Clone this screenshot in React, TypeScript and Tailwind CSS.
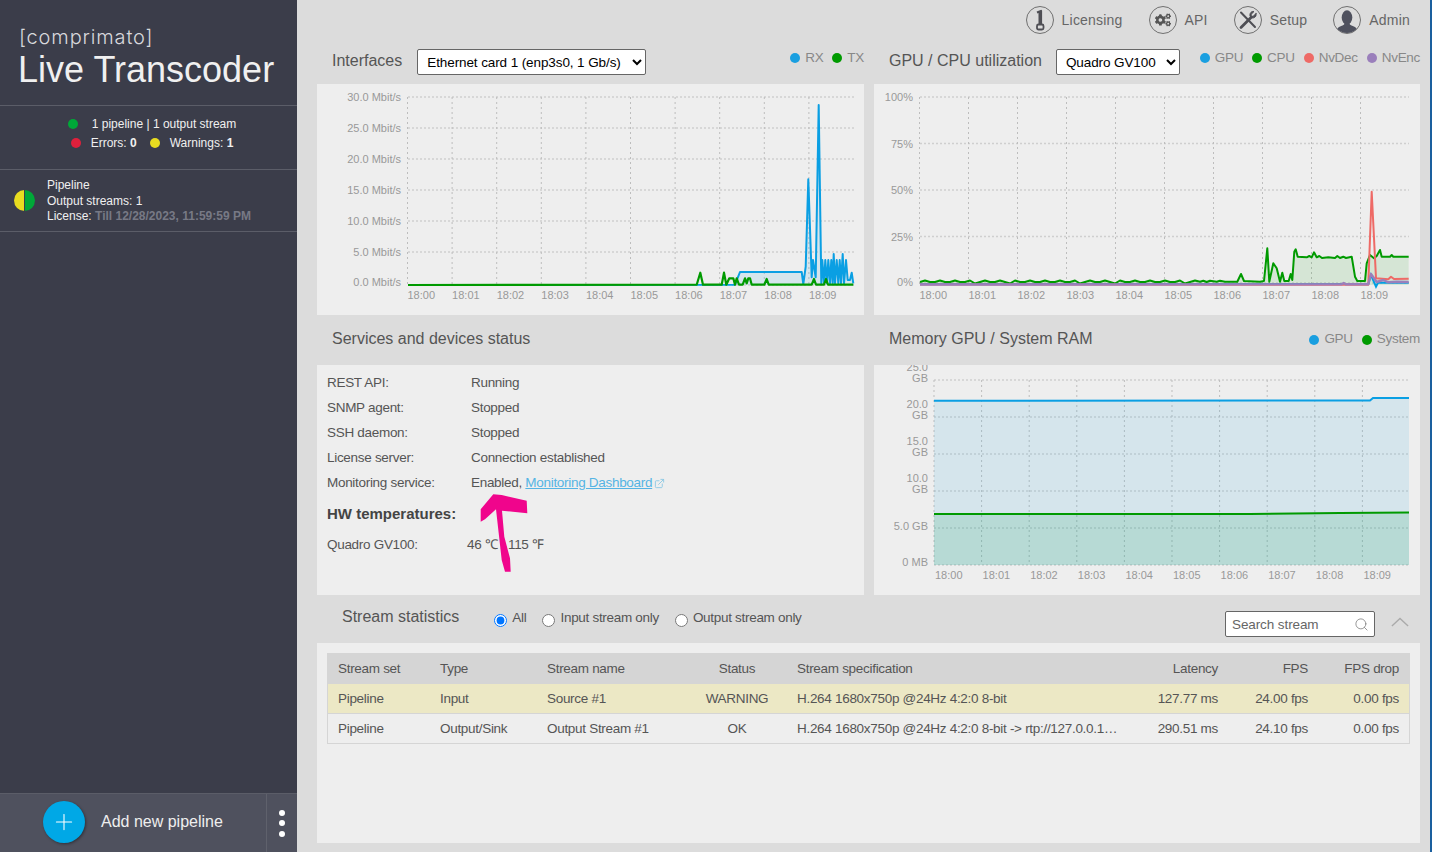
import React from "react";
import { Plus, ExternalLink, Search } from "lucide-react";
import { FaCogs } from "react-icons/fa";

type P = [number, number];
const toPath = (pts: P[]) => "M" + pts.map((p) => `${p[0].toFixed(1)} ${p[1].toFixed(1)}`).join("L");
const area = (pts: P[], base: number) =>
  toPath(pts) + `L${pts[pts.length - 1][0]} ${base}L${pts[0][0]} ${base}Z`;

const z1 = (p: P[]): P[] => p.map(([x, y]) => [640 + x / 3, 80 + y / 3]);
const z2 = (p: P[]): P[] => p.map(([x, y]) => [1200 + x / 3, 170 + y / 3]);

const rxPts: P[] = [
  [408, 285],
  ...z1([
    [285, 614], [300, 576], [485, 576], [490, 612], [497, 560], [505, 298], [515, 592], [519, 540], [527, 592],
    [536, 75], [544, 610], [547, 540], [552, 610], [556, 540], [561, 610], [565, 540], [570, 610], [574, 540],
    [578, 610], [581, 522], [585, 610], [590, 540], [595, 610], [599, 540], [603, 610], [608, 522], [612, 610],
    [618, 540], [623, 600], [630, 600], [635, 578], [640, 610],
  ]),
];
const txPts: P[] = [
  [408, 285],
  ...z1([
    [170, 614], [181, 578], [189, 614], [245, 614], [252, 578], [259, 614], [268, 595], [280, 595], [285, 614],
    [290, 595], [297, 614], [308, 614], [315, 595], [320, 610], [325, 595], [330, 595], [335, 614], [373, 614],
    [380, 597], [386, 614], [515, 614], [522, 597], [528, 614], [552, 614], [558, 597], [564, 614], [640, 614],
  ]),
];

const wiggle: P[] = [];
for (let x = 920, i = 0; x < 1200; x += 5, i++) wiggle.push([x, i % 3 === 1 ? 280.5 : i % 7 === 4 ? 283.5 : 282]);
const cpuPts: P[] = [
  ...wiggle,
  ...z2([
    [0, 335], [10, 332], [20, 336], [30, 332], [50, 335], [60, 332], [75, 335], [100, 335], [112, 335], [123, 312],
    [132, 333], [180, 335], [192, 333], [202, 235], [208, 335], [220, 280], [230, 295], [240, 335], [247, 308],
    [253, 333], [266, 333], [272, 312], [277, 330], [283, 245], [287, 238], [293, 260], [320, 262], [328, 258],
    [335, 262], [342, 247], [350, 262], [358, 258], [366, 264], [385, 262], [405, 264], [412, 258], [420, 264],
    [430, 260], [438, 264], [455, 260], [465, 320], [472, 333], [495, 333], [500, 280], [510, 255], [522, 265],
    [530, 258], [540, 240], [545, 260], [570, 260], [575, 255], [580, 260], [626, 260],
  ]),
];
const gpuPts: P[] = [[920, 284], ...z2([[505, 342], [513, 315], [528, 350], [534, 338], [626, 338]])];
const decPts: P[] = [[920, 284.5], ...z2([[505, 344], [515, 65], [528, 325], [565, 328], [573, 320], [582, 327], [626, 326]])];
const encPts: P[] = [[920, 284.5], ...z2([[425, 343], [431, 339], [437, 343], [505, 343], [513, 312], [530, 336], [550, 330], [565, 337], [590, 335], [626, 336]])];

const GridLines = ({ xs, ys, x0, x1, y0, y1 }: { xs: number[]; ys: number[]; x0: number; x1: number; y0: number; y1: number }) => (
  <g>
    {ys.map((y) => (
      <line key={y} x1={x0} x2={x1} y1={y} y2={y} stroke="#cfcfcf" strokeWidth={1.5} strokeDasharray="2 2" />
    ))}
    {xs.map((x) => (
      <line key={x} x1={x} x2={x} y1={y0} y2={y1} stroke="#bdbdbd" strokeWidth={1} strokeDasharray="2 3" />
    ))}
  </g>
);

const tick = "fill-[#999] text-[11px] tracking-normal";
const times = ["18:00", "18:01", "18:02", "18:03", "18:04", "18:05", "18:06", "18:07", "18:08", "18:09"];

function InterfacesChart() {
  const xs = times.map((_, i) => 407.5 + i * 44.6);
  const ys = [97, 128, 159, 190, 221, 252, 285];
  const labels = ["30.0 Mbit/s", "25.0 Mbit/s", "20.0 Mbit/s", "15.0 Mbit/s", "10.0 Mbit/s", "5.0 Mbit/s", "0.0 Mbit/s"];
  return (
    <svg viewBox="317 84 547 231" className="block w-full h-full">
      <GridLines xs={xs} ys={ys} x0={408} x1={854} y0={97} y1={285} />
      {labels.map((l, i) => (
        <text key={l} x={401} y={ys[i] + 4 - (i === 6 ? 3 : 0)} textAnchor="end" className={tick}>{l}</text>
      ))}
      {times.map((t, i) => (
        <text key={t} x={xs[i]} y={299} className={tick}>{t}</text>
      ))}
      <path d={area(rxPts, 285)} fill="#009fe3" fillOpacity={0.1} />
      <path d={toPath(rxPts)} fill="none" stroke="#0a9fe3" strokeWidth={2} strokeLinejoin="round" />
      <path d={toPath(txPts)} fill="none" stroke="#009a00" strokeWidth={2.2} strokeLinejoin="round" />
    </svg>
  );
}

function GpuChart() {
  const xs = times.map((_, i) => 919.5 + i * 49);
  const ys = [97, 143.5, 190, 236.5, 283];
  const labels = ["100%", "75%", "50%", "25%", "0%"];
  return (
    <svg viewBox="874 84 546 231" className="block w-full h-full">
      <GridLines xs={xs} ys={ys} x0={920} x1={1409} y0={97} y1={285} />
      {labels.map((l, i) => (
        <text key={l} x={913} y={ys[i] + 4 - (i === 4 ? 1 : 0)} textAnchor="end" className={tick}>{l}</text>
      ))}
      {times.map((t, i) => (
        <text key={t} x={xs[i]} y={299} className={tick}>{t}</text>
      ))}
      <path d={area(cpuPts, 285)} fill="#009a00" fillOpacity={0.1} />
      <path d={toPath(gpuPts)} fill="none" stroke="#009fe3" strokeWidth={2} />
      <path d={toPath(cpuPts)} fill="none" stroke="#009a00" strokeWidth={2} strokeLinejoin="round" />
      <path d={toPath(decPts)} fill="none" stroke="#ee6a66" strokeWidth={2} strokeLinejoin="round" />
      <path d={toPath(encPts)} fill="none" stroke="#9a7fbb" strokeWidth={2.4} strokeLinejoin="round" />
    </svg>
  );
}

function MemoryChart() {
  const xs = times.map((_, i) => 934 + i * 47.6);
  const ys = [380, 417, 454, 491, 528, 565];
  const blue: P[] = [[934, 400.7], [1370, 400.5], [1373, 398], [1409, 398]];
  const green: P[] = [[934, 514], [1250, 514], [1340, 513], [1409, 512.5]];
  const two: [string, string, number][] = [["25.0", "GB", 367], ["20.0", "GB", 404], ["15.0", "GB", 441], ["10.0", "GB", 478]];
  return (
    <svg viewBox="874 365 546 230" className="block w-full h-full">
      <GridLines xs={xs} ys={ys} x0={934} x1={1409} y0={380} y1={565} />
      {two.map(([a, b, y]) => (
        <g key={a}>
          <text x={928} y={y + 4} textAnchor="end" className={tick}>{a}</text>
          <text x={928} y={y + 15} textAnchor="end" className={tick}>{b}</text>
        </g>
      ))}
      <text x={928} y={530} textAnchor="end" className={tick}>5.0 GB</text>
      <text x={928} y={566} textAnchor="end" className={tick}>0 MB</text>
      {times.map((t, i) => (
        <text key={t} x={xs[i] + 1} y={579} className={tick}>{t}</text>
      ))}
      <path d={area(blue, 565)} fill="#009fe3" fillOpacity={0.1} />
      <path d={area(green, 565)} fill="#009a50" fillOpacity={0.14} />
      <path d={toPath(blue)} fill="none" stroke="#0a9fe3" strokeWidth={2} />
      <path d={toPath(green)} fill="none" stroke="#009a00" strokeWidth={2} />
    </svg>
  );
}

const Ring = ({ children }: { children: React.ReactNode }) => (
  <span className="relative flex items-center justify-center w-[28px] h-[28px] rounded-full border-[1.5px] border-[#707070] text-[#555] overflow-hidden">
    {children}
  </span>
);

const KeyIcon = () => (
  <svg viewBox="0 0 12 22" className="w-[12px] h-[22px]" fill="none" stroke="#4f4f55">
    <path d="M3 3.500L7 2V15" strokeWidth={2.200} strokeLinejoin="round" />
    <path d="M6 3V16" strokeWidth={3} />
    <rect x="3" y="15.500" width="6.500" height="5" rx="1.500" strokeWidth={1.800} />
  </svg>
);
const ToolsIcon = () => (
  <svg viewBox="0 0 24 24" className="w-[24px] h-[24px]" fill="none" stroke="#4f4f55" strokeLinecap="round">
    <path d="M5 4.500L19 19" strokeWidth={2} />
    <path d="M5 19.500L15 9.500" strokeWidth={2.800} />
    <path d="M20 5.500L17.200 8.300L15.200 8.300L15.200 6.300L18 3.500C15.500 3 13.500 5 14 8L15.500 9.800C18.500 10.500 20.800 8.500 20 5.500Z" fill="#4f4f55" strokeWidth={1} />
  </svg>
);
const UserIcon = () => (
  <svg viewBox="0 0 26 26" className="w-[26px] h-[26px]" fill="#4f515e">
    <ellipse cx="13" cy="10.500" rx="5.300" ry="7.200" />
    <path d="M2 25c.5-4 3-5.500 6.500-6.500 1.500-.6 2-1.500 2-2.500h5c0 1 .5 1.900 2 2.500 3.500 1 6 2.500 6.500 6.500-3 1.500-6.500 2-11 2s-8-.5-11-2z" />
  </svg>
);

const NavItem = ({ icon, label }: { icon: React.ReactNode; label: string }) => (
  <div className="flex items-center gap-[8px]">
    <Ring>{icon}</Ring>
    <span className="text-[14px] tracking-[0.2px] text-[#666]">{label}</span>
  </div>
);

const Legend = ({ items }: { items: [string, string][] }) => (
  <div className="flex items-center gap-[9px]">
    {items.map(([c, l]) => (
      <div key={l} className="flex items-center gap-[5px]">
        <span className="w-[10px] h-[10px] rounded-full" style={{ background: c }} />
        <span className="text-[13.500px] tracking-[-0.3px] text-[#888]">{l}</span>
      </div>
    ))}
  </div>
);

const Heading = ({ children }: { children: React.ReactNode }) => (
  <span className="text-[16px] tracking-normal text-[#555] -mt-[2px]">{children}</span>
);

const selectCls =
  "h-[26px] bg-white border border-[#666] rounded-[2px] text-[13.500px] text-black pl-[5px]";

const statusRows: [string, React.ReactNode][] = [
  ["REST API:", "Running"],
  ["SNMP agent:", "Stopped"],
  ["SSH daemon:", "Stopped"],
  ["License server:", "Connection established"],
  [
    "Monitoring service:",
    <span className="flex items-center" key="m">
      Enabled,&nbsp;<span className="text-[#55b4e4] underline">Monitoring Dashboard</span>
      <ExternalLink size={11} className="ml-[2px] text-[#8cc8e4]" />
    </span>,
  ],
];

const cols = "grid grid-cols-[101px_107px_153px_96px_340px_104px_90px_90px] items-center";
const Row = ({ cells, cls }: { cells: string[]; cls: string }) => (
  <div className={`${cols} ${cls} pt-[2px] text-[13.500px] tracking-[-0.3px] text-[#555]`}>
    <div className="pl-[10px]">{cells[0]}</div>
    <div className="pl-[11px]">{cells[1]}</div>
    <div className="pl-[11px]">{cells[2]}</div>
    <div className="text-center">{cells[3]}</div>
    <div className="pl-[12px] pr-[6px] truncate">{cells[4]}</div>
    <div className="text-right pr-[11px]">{cells[5]}</div>
    <div className="text-right pr-[11px]">{cells[6]}</div>
    <div className="text-right pr-[10px]">{cells[7]}</div>
  </div>
);

const Radio = ({ label, checked }: { label: string; checked?: boolean }) => (
  <label className="flex items-center gap-[5px] text-[13.500px] tracking-[-0.3px] text-[#555]">
    <input type="radio" name="filter" defaultChecked={checked} className="w-[13px] h-[13px] m-0 mt-[3px]" />
    {label}
  </label>
);

export default function App() {
  return (
    <div className="relative flex w-[1432px] h-[852px] overflow-hidden font-['Liberation_Sans',Arial,sans-serif]">
      <aside className="w-[297px] shrink-0 flex flex-col bg-[#3b3d4a] text-[#f0f0f0]">
        <div className="h-[106px] border-b border-[#5b5d68] pl-[18px] pt-[23px]">
          <div className="ml-[1px] font-['Inter',sans-serif] font-light text-[20px] leading-[28px] tracking-[0.85px] text-[#d8d8dc]">[comprimato]</div>
          <div className="text-[36px] leading-[36px] mt-[1px]">Live Transcoder</div>
        </div>
        <div className="h-[64px] border-b border-[#5b5d68] flex flex-col justify-center items-center pl-[7px] pb-[8px] gap-[3px] text-[12px] leading-[16px]">
          <div className="flex items-center gap-[14px]">
            <span className="w-[10px] h-[10px] rounded-full bg-[#00a838]" />
            <span>1 pipeline | 1 output stream</span>
          </div>
          <div className="flex items-center">
            <span className="w-[10px] h-[10px] rounded-full bg-[#e0203c] mr-[10px]" />
            <span>Errors: <b>0</b></span>
            <span className="w-[10px] h-[10px] rounded-full bg-[#e8dc20] ml-[13px] mr-[10px]" />
            <span>Warnings: <b>1</b></span>
          </div>
        </div>
        <div className="h-[62px] border-b border-[#5b5d68] flex items-center pl-[14px] gap-[12px] text-[12px] leading-[15px]">
          <div className="flex w-[21px] h-[21px] rounded-full overflow-hidden gap-[1px]">
            <span className="flex-1 bg-[#e8dc20]" />
            <span className="flex-1 bg-[#00a838]" />
          </div>
          <div>
            <div className="mb-[1px]">Pipeline</div>
            <div>Output streams: 1</div>
            <div>License: <b className="text-[#777985]">Till 12/28/2023, 11:59:59 PM</b></div>
          </div>
        </div>
        <div className="flex-1" />
        <div className="h-[59px] flex bg-[#4f515e] border-t border-[#5b5d68]">
          <div className="flex-1 flex items-center pl-[43px] pb-[2px] gap-[16px]">
            <span className="w-[42px] h-[42px] rounded-full bg-[#00a8e6] shadow-[1px_1px_3px_rgba(0,0,0,0.4)] flex items-center justify-center">
              <Plus size={26} strokeWidth={1} className="text-white" />
            </span>
            <span className="text-[16px] text-[#eeeeee]">Add new pipeline</span>
          </div>
          <div className="w-[31px] border-l border-[#5f616c] flex flex-col items-center justify-center gap-[4.500px]">
            <span className="w-[6px] h-[6px] rounded-full bg-white" />
            <span className="w-[6px] h-[6px] rounded-full bg-white" />
            <span className="w-[6px] h-[6px] rounded-full bg-white" />
          </div>
        </div>
      </aside>

      <main className="flex-1 min-w-0 bg-[#dcdcdc] pl-[20px] pr-[10px] flex flex-col">
        <div className="h-[40px] flex justify-end items-center gap-[26px] pr-[10px]">
          <NavItem icon={<KeyIcon />} label="Licensing" />
          <NavItem icon={<FaCogs size={16} />} label="API" />
          <NavItem icon={<ToolsIcon />} label="Setup" />
          <NavItem icon={<UserIcon />} label="Admin" />
        </div>

        <div className="grid grid-cols-[547px_546px] gap-x-[10px]">
          <div className="h-[44px] flex items-center pl-[15px]">
            <Heading>Interfaces</Heading>
            <select className={`${selectCls} tracking-[-0.1px] ml-[15px] w-[229px]`}>
              <option>Ethernet card 1 (enp3s0, 1 Gb/s)</option>
            </select>
            <div className="ml-auto -mt-[8px]">
              <Legend items={[["#1a9fe0", "RX"], ["#009a00", "TX"]]} />
            </div>
          </div>
          <div className="h-[44px] flex items-center pl-[15px]">
            <Heading>GPU / CPU utilization</Heading>
            <select className={`${selectCls} tracking-[-0.1px] ml-[14px] w-[124px]`}>
              <option>Quadro GV100</option>
            </select>
            <div className="ml-auto -mt-[8px]">
              <Legend items={[["#1a9fe0", "GPU"], ["#009a00", "CPU"], ["#ee6a66", "NvDec"], ["#9a7fbb", "NvEnc"]]} />
            </div>
          </div>

          <div className="h-[231px] bg-[#eeeeee]"><InterfacesChart /></div>
          <div className="h-[231px] bg-[#eeeeee]"><GpuChart /></div>

          <div className="h-[50px] flex items-center pl-[15px]">
            <Heading>Services and devices status</Heading>
          </div>
          <div className="h-[50px] flex items-center pl-[15px]">
            <Heading>Memory GPU / System RAM</Heading>
            <div className="ml-auto -mt-[1px]">
              <Legend items={[["#1a9fe0", "GPU"], ["#009a00", "System"]]} />
            </div>
          </div>

          <div className="h-[230px] bg-[#eeeeee] pl-[10px] pt-[6px] text-[13.500px] tracking-[-0.3px] text-[#555]">
            {statusRows.map(([k, v], i) => (
              <div key={i} className="flex items-center h-[25px]">
                <span className="w-[144px]">{k}</span>
                <span>{v}</span>
              </div>
            ))}
            <div className="text-[15px] font-bold leading-[18px] mt-[9px] text-[#444] tracking-normal">HW temperatures:</div>
            <div className="flex items-center h-[25px] mt-[10px]">
              <span className="w-[140px]">Quadro GV100:</span>
              <span>46 ℃ / 115 ℉</span>
            </div>
          </div>
          <div className="h-[230px] bg-[#eeeeee]"><MemoryChart /></div>
        </div>

        <div className="h-[48px] flex items-center pl-[25px] pr-[11px] relative">
          <span className="text-[16px] text-[#555] -mt-[5px]">Stream statistics</span>
          <div className="flex items-center gap-[16px] ml-[35px] -mt-[1px]">
            <Radio label="All" checked />
            <Radio label="Input stream only" />
            <Radio label="Output stream only" />
          </div>
          <div className="relative ml-auto mt-[9px]">
            <input
              placeholder="Search stream"
              className="block w-[150px] h-[26px] bg-white border border-[#666] rounded-[2px] pl-[6px] pt-[1px] text-[13.500px] tracking-[-0.1px] text-[#555] placeholder:text-[#666]"
            />
            <Search size={15} strokeWidth={1.2} className="absolute right-[6px] top-[6px] text-[#777]" />
          </div>
          <svg viewBox="0 0 20 11" className="w-[18px] h-[10px] ml-[16px] mt-[5px]" fill="none" stroke="#aaa" strokeWidth={1.5}>
            <path d="M1 10L10 1.500L19 10" />
          </svg>
        </div>

        <div className="h-[200px] bg-[#eeeeee] px-[10px] pt-[10px]">
          <Row cls="h-[31px] bg-[#d5d5d5] border-x border-[#d5d5d5]" cells={["Stream set", "Type", "Stream name", "Status", "Stream specification", "Latency", "FPS", "FPS drop"]} />
          <Row cls="h-[30px] bg-[#ece8c5] border-x border-b border-[#d5d5d5]" cells={["Pipeline", "Input", "Source #1", "WARNING", "H.264 1680x750p @24Hz 4:2:0 8-bit", "127.77 ms", "24.00 fps", "0.00 fps"]} />
          <Row cls="h-[30px] border-x border-b border-[#d5d5d5]" cells={["Pipeline", "Output/Sink", "Output Stream #1", "OK", "H.264 1680x750p @24Hz 4:2:0 8-bit -> rtp://127.0.0.1:5004", "290.51 ms", "24.10 fps", "0.00 fps"]} />
        </div>
      </main>
      <div className="w-[2px] shrink-0 bg-[#1a5f9e]" />

      <svg viewBox="0 0 1432 852" className="absolute inset-0 w-[1432px] h-[852px] pointer-events-none">
        <path
          d="M496 509.300L498.700 533.300L501.700 560L505 571.700L510.700 571.700L510 558.300L504.300 536.700L502 510.700L527.300 513.300L526.700 500.700L501.700 495L493.300 494.300L480.700 509.300L480.700 521.700L485 519.300Z"
          fill="#f0058c"
        />
      </svg>
    </div>
  );
}
